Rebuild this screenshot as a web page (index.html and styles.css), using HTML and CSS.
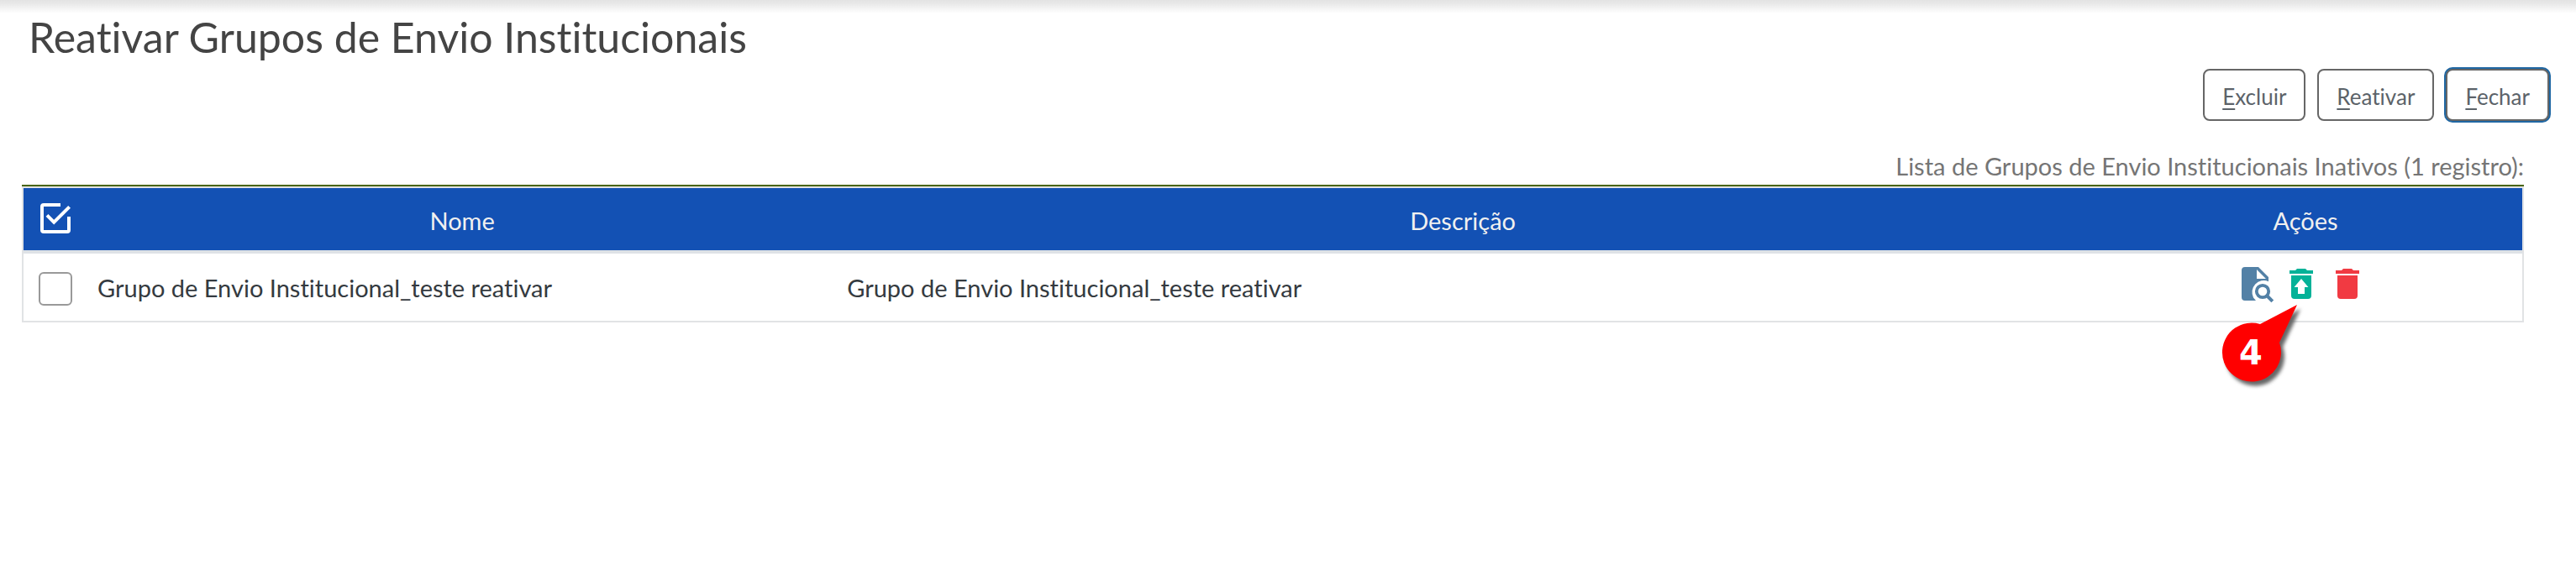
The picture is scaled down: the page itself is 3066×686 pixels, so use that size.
FILE: index.html
```html
<!DOCTYPE html>
<html lang="pt-BR">
<head>
<meta charset="utf-8">
<title>Reativar Grupos de Envio Institucionais</title>
<link rel="stylesheet" href="styles.css">
</head>
<body>
<main class="page">
  <h1 class="title">Reativar Grupos de Envio Institucionais</h1>
  <div class="toolbar">
    <button type="button" class="btn" accesskey="e"><u>E</u>xcluir</button>
    <button type="button" class="btn" accesskey="r"><u>R</u>eativar</button>
    <button type="button" class="btn btn-active" accesskey="f"><u>F</u>echar</button>
  </div>
  <table class="groups">
    <caption>Lista de Grupos de Envio Institucionais Inativos (1 registro):</caption>
    <colgroup><col class="col-check"><col class="col-name"><col><col class="col-actions"></colgroup>
    <thead>
      <tr>
        <th><button type="button" class="icon-btn" aria-label="Selecionar tudo"><svg class="icon" viewBox="0 0 24 24" fill="none" stroke="#fff" stroke-width="2"><path d="M15 4H5Q4 4 4 5V19Q4 20 5 20H19Q20 20 20 19V11"/><path d="M7 10.2L11.1 14.3L20.3 5.2"/></svg></button></th>
        <th>Nome</th>
        <th>Descrição</th>
        <th>Ações</th>
      </tr>
    </thead>
    <tbody>
      <tr>
        <td class="check-cell"><input type="checkbox" class="check" aria-label="Selecionar grupo"></td>
        <td>Grupo de Envio Institucional_teste reativar</td>
        <td>Grupo de Envio Institucional_teste reativar</td>
        <td>
          <div class="actions">
            <button type="button" class="icon-btn" aria-label="Consultar"><svg class="icon" viewBox="0 0 24 24"><path fill="#5381a6" fill-rule="evenodd" d="M6 2H14L20 8V10.6A7 7 0 0 0 11 20.2L12.5 22H6A2 2 0 0 1 4 20V4A2 2 0 0 1 6 2ZM13 3.5V9H18.5Z"/><circle cx="16.5" cy="16.5" r="3.6" fill="none" stroke="#5381a6" stroke-width="1.9"/><path d="M19 19L22.4 22.4" stroke="#5381a6" stroke-width="2"/></svg></button>
            <button type="button" class="icon-btn" aria-label="Reativar"><svg class="icon" viewBox="0 0 24 24"><path fill="#04b298" fill-rule="evenodd" d="M19 4H15.5L14.5 3H9.5L8.5 4H5V6H19ZM6 7V19A2 2 0 0 0 8 21H16A2 2 0 0 0 18 19V7ZM12 9L16.2 14H14V18H10V14H7.8Z"/></svg></button>
            <button type="button" class="icon-btn" aria-label="Excluir"><svg class="icon" viewBox="0 0 24 24"><path fill="#f13a42" d="M19 4H15.5L14.5 3H9.5L8.5 4H5V6H19ZM6 7V19A2 2 0 0 0 8 21H16A2 2 0 0 0 18 19V7Z"/></svg></button>
            <div class="callout">
              <svg class="callout-shape" viewBox="0 0 108 108"><path fill="#f00" d="M91 1L70 46A35 35 0 1 1 47 24Z"/></svg>
              <span class="callout-number">4</span>
            </div>
          </div>
        </td>
      </tr>
    </tbody>
  </table>
</main>
</body>
</html>
```
FILE: styles.css
```css
* { box-sizing: border-box; }
body {
  margin: 0;
  background: #fff;
  color: #343a40;
  font-family: Lato, "Liberation Sans", sans-serif;
  font-size: 29px;
  font-variant-ligatures: none;
  line-height: 40px;
}
.page {
  min-height: 100vh;
  padding: 16px 30px 0 26px;
  background: linear-gradient(#e3e3e3 0, #e8e8e8 4px, #fff 16px) no-repeat;
}
.title {
  margin: 0;
  padding-left: 8px;
  color: #444;
  font-size: 50px;
  font-weight: 400;
  line-height: 56px;
}
.toolbar {
  display: flex;
  justify-content: flex-end;
  gap: 14px;
  padding: 10px 2px 0 0;
}
.btn {
  height: 62px;
  padding: 4px 21px 0;
  border: 2px solid #666;
  border-radius: 8px;
  background: #fff;
  color: #5c6369;
  font: inherit;
  font-size: 26px;
}
.btn u { text-underline-offset: 4px; }
.btn-active { box-shadow: 0 0 0 2px #1f67a3; }
.groups {
  width: calc(100% - 32px);
  margin-top: 34px;
  table-layout: fixed;
  border-collapse: separate;
  border-spacing: 0;
  border: 2px solid #e1e3e5;
}
.groups caption {
  padding-bottom: 2px;
  border-bottom: 2px solid #4a6508;
  color: #757575;
  text-align: right;
}
.col-check { width: 76px; }
.col-name { width: 30%; }
.col-actions { width: 516px; }
th {
  height: 78px;
  padding: 4px 12px 0;
  border-bottom: 4px solid #dee2e6;
  background: #1351b4;
  color: #f0f0f0;
  font-weight: 400;
}
th:first-child { padding: 0 14px 2px; }
td { height: 80px; padding: 2px 12px 0; }
.check-cell { padding: 4px 18px 0; }
.check {
  appearance: none;
  display: block;
  width: 40px;
  height: 40px;
  margin: 0;
  border: 2px solid #999;
  border-radius: 6px;
}
.icon-btn {
  display: block;
  padding: 0;
  border: 0;
  background: none;
}
.icon { display: block; width: 48px; height: 48px; }
.actions {
  position: relative;
  display: flex;
  gap: 7px;
  width: 158px;
  margin: -10px auto 0 162px;
}
.callout {
  position: absolute;
  top: 48px;
  left: -17px;
  width: 108px;
  height: 108px;
}
.callout-shape {
  display: block;
  width: 108px;
  height: 108px;
  filter: drop-shadow(4px 5px 2px #666);
}
.callout-number {
  position: absolute;
  inset: 38px 36px 0 0;
  color: #fff;
  font: 700 40px/40px "DejaVu Sans", sans-serif;
  text-align: center;
}
```
